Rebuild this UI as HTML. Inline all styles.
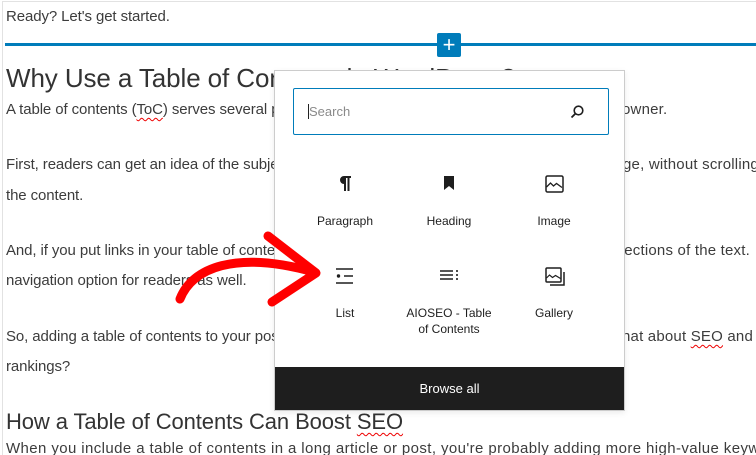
<!DOCTYPE html>
<html><head><meta charset="utf-8"><style>
*{margin:0;padding:0;box-sizing:border-box}
body{width:756px;height:455px;overflow:hidden;background:#fff;font-family:"Liberation Sans",sans-serif;color:#3c3c3c;position:relative}
.clip{position:absolute;left:0;top:0;width:756px;height:455px;overflow:hidden}
.frame{position:absolute;left:2px;top:1px;width:754px;height:454px;border:1px solid #e2e2e2;border-right:none;border-bottom:none}
.t{position:absolute;left:6px;font-size:15px;white-space:nowrap;letter-spacing:-0.1px}
.r{position:absolute;font-size:15px;white-space:nowrap;letter-spacing:0.2px}
.sq{text-decoration:underline wavy #e00;text-decoration-thickness:1px;text-underline-offset:3px}
.pop{position:absolute;left:274px;top:70px;width:351px;height:341px;background:#fff;border:1px solid #ccc;box-shadow:0 2px 6px rgba(0,0,0,.08)}
.search{position:absolute;left:18px;top:17px;width:316px;height:47px;border:1.5px solid #007cba;border-radius:2px}
.search span{position:absolute;left:14px;top:15px;font-size:13px;color:#8a8a8a;border-left:1px solid #222}
.lbl{position:absolute;font-size:12px;color:#1e1e1e;text-align:center;width:110px;line-height:16px}
.browse{position:absolute;left:0;bottom:0;width:349px;height:43px;background:#1e1e1e;color:#fff;font-size:13px;text-align:center;line-height:43px}
</style></head><body>
<div class="clip">
<div class="frame"></div>
<div class="t" style="top:8px">Ready? Let's get started.</div>
<div style="position:absolute;left:5px;top:43px;width:751px;height:3px;background:#007cba"></div>
<div style="position:absolute;left:437px;top:33px;width:24px;height:24px;background:#007cba;border-radius:2px;color:#fff;font-size:22px;line-height:23px;text-align:center">+</div>
<div class="t" style="top:63px;font-size:26px;color:#333">Why Use a Table of Contents in WordPress?</div>
<div class="t" style="top:101px">A table of contents (<span class="sq">ToC</span>) serves several purposes for your</div>
<div class="r" style="top:101px;left:622px">owner.</div>
<div class="t" style="top:156px">First, readers can get an idea of the subject matter of the post or</div>
<div class="r" style="top:156px;left:623px">ge, without scrolling through</div>
<div class="t" style="top:187px">the content.</div>
<div class="t" style="top:242px">And, if you put links in your table of contents, readers can jump</div>
<div class="r" style="top:242px;right:6px">ections of the text.</div>
<div class="t" style="top:272px">navigation option for readers as well.</div>
<div class="t" style="top:328px">So, adding a table of contents to your posts helps improve the user</div>
<div class="r" style="top:328px;right:3px">hat about <span class="sq">SEO</span> and</div>
<div class="t" style="top:358px">rankings?</div>
<div class="t" style="top:409px;font-size:22px;color:#333">How a Table of Contents Can Boost <span class="sq">SEO</span></div>
<div class="t" style="top:440px;letter-spacing:0.4px">When you include a table of contents in a long article or post, you're probably adding more high-value keywords</div>

<div class="pop">
 <div class="search"><span>Search</span>
  <svg style="position:absolute;right:23px;top:15px" width="16" height="16" viewBox="0 0 16 16"><circle cx="9.5" cy="6.5" r="4.3" fill="none" stroke="#1e1e1e" stroke-width="1.6"/><path d="M6.4 9.6L2.5 13.5" stroke="#1e1e1e" stroke-width="1.8"/></svg>
 </div>
 <svg style="position:absolute;left:63px;top:104px" width="14" height="16" viewBox="0 0 14 16"><path d="M6 1h7v2h-1.5v13h-2V3H8v13H6V9a4 4 0 0 1 0-8z" fill="#1e1e1e"/></svg>
 <svg style="position:absolute;left:169px;top:105px" width="10" height="14" viewBox="0 0 10 14"><path d="M0 0h10v14L5 10 0 14z" fill="#1e1e1e"/></svg>
 <svg style="position:absolute;left:270px;top:104px" width="19" height="18" viewBox="0 0 19 18"><rect x="1" y="1" width="17" height="16" rx="1.5" fill="none" stroke="#1e1e1e" stroke-width="1.5"/><path d="M1.5 12l4-4 3 3 3-2.5 5.5 4" fill="none" stroke="#1e1e1e" stroke-width="1.3"/></svg>
 <div class="lbl" style="left:15px;top:142px">Paragraph</div>
 <div class="lbl" style="left:119px;top:142px">Heading</div>
 <div class="lbl" style="left:224px;top:142px">Image</div>
 <svg style="position:absolute;left:61px;top:197px" width="17" height="16" viewBox="0 0 17 16"><path d="M0 1h17M0 15h17M8 8h9" stroke="#1e1e1e" stroke-width="1.4"/><circle cx="2.5" cy="8" r="1.7" fill="#1e1e1e"/></svg>
 <svg style="position:absolute;left:165px;top:199px" width="19" height="10" viewBox="0 0 19 10"><path d="M0 1h13M0 5h13M0 9h13" stroke="#1e1e1e" stroke-width="1.6"/><path d="M17 0v2M17 4v2M17 8v2" stroke="#1e1e1e" stroke-width="1.6"/></svg>
 <svg style="position:absolute;left:270px;top:196px" width="21" height="20" viewBox="0 0 21 20"><rect x="1" y="1" width="15" height="14" rx="1" fill="none" stroke="#1e1e1e" stroke-width="1.5"/><path d="M1.5 11l3-3 3 2.5 3-2 5 3" fill="none" stroke="#1e1e1e" stroke-width="1.2"/><path d="M19 5v13H5" fill="none" stroke="#1e1e1e" stroke-width="1.5"/></svg>
 <div class="lbl" style="left:15px;top:234px">List</div>
 <div class="lbl" style="left:119px;top:234px">AIOSEO - Table<br>of Contents</div>
 <div class="lbl" style="left:224px;top:234px">Gallery</div>
 <div class="browse">Browse all</div>
</div>
<svg style="position:absolute;left:0;top:0" width="756" height="455"><path d="M180 299C192 268 235 250 314 272" fill="none" stroke="#f00" stroke-width="9" stroke-linecap="round"/><path d="M268 236L316 273L272 302" fill="none" stroke="#f00" stroke-width="9" stroke-linecap="round" stroke-linejoin="round"/></svg>
</div>
</body></html>
